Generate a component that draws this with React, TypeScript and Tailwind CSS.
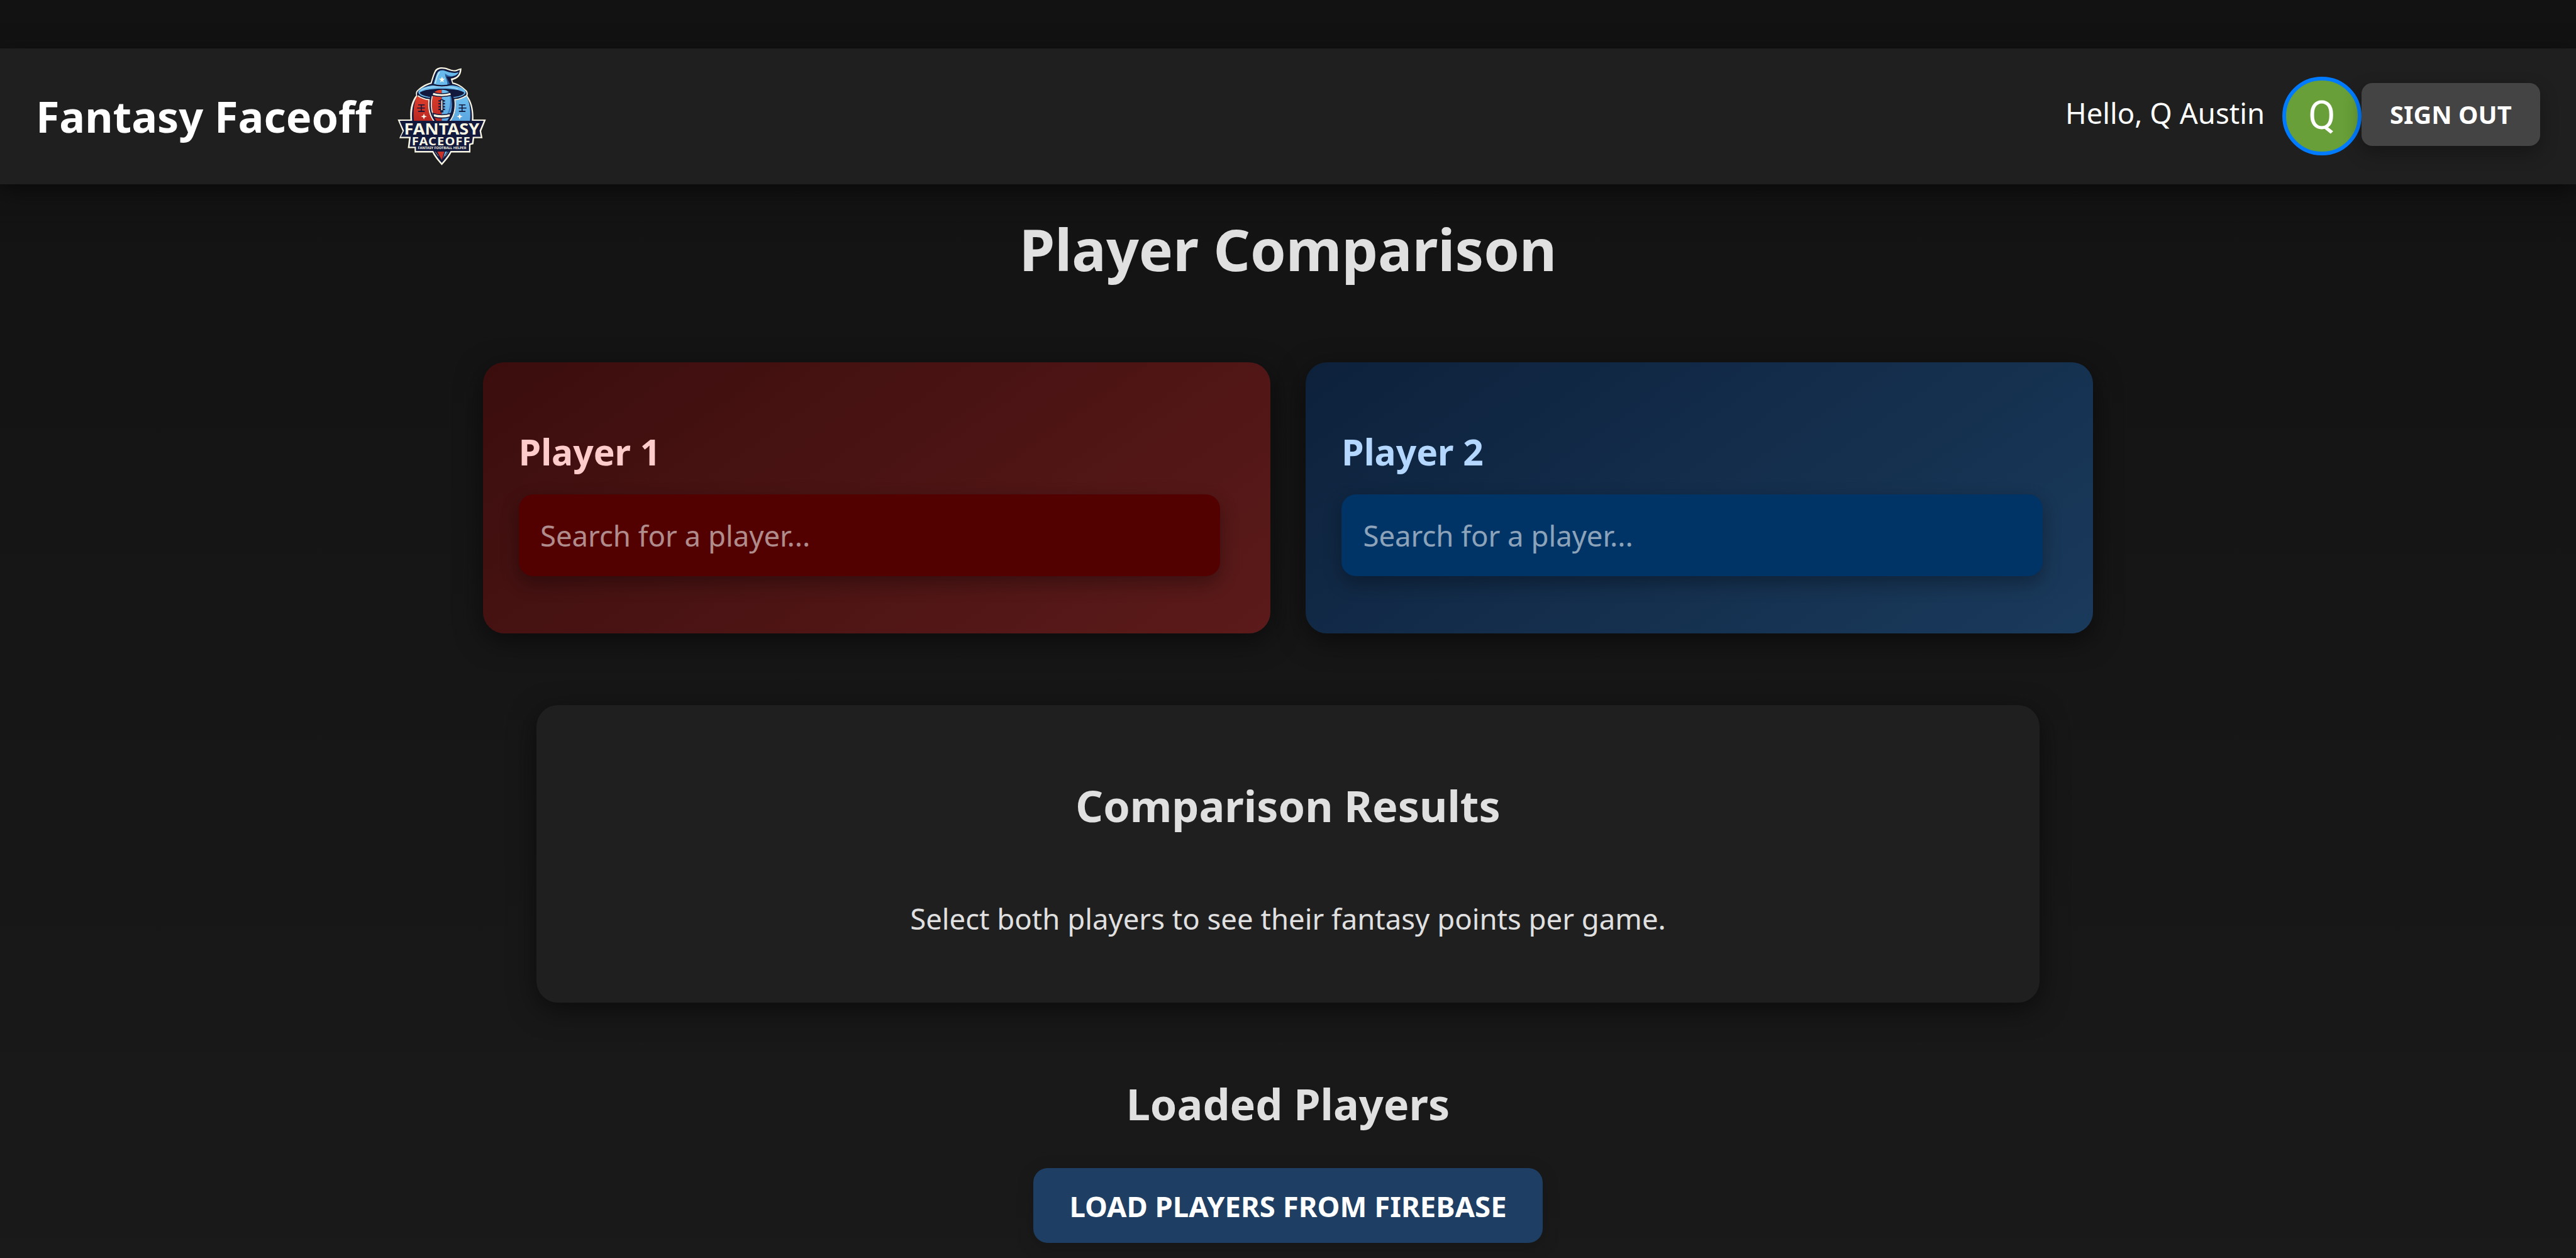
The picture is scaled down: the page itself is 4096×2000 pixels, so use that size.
function Logo() {
  return (
    <svg viewBox="34.5 45 540 540" className="ml-[26.6px] size-[170.67px] shrink-0" aria-label="Fantasy Faceoff logo">
      <defs>
        <linearGradient id="red" x1="0" y1="0" x2="0" y2="1">
          <stop offset="0" stopColor="#e0402c" />
          <stop offset="1" stopColor="#b92722" />
        </linearGradient>
        <linearGradient id="blue" x1="0" y1="0" x2="0" y2="1">
          <stop offset="0" stopColor="#6fc0f0" />
          <stop offset="1" stopColor="#5aa5df" />
        </linearGradient>
      </defs>
      {/* cream outline */}
      <path
        d="M249 144 C256 120 262 100 270 84 C278 68 302 64 322 69 C345 75 360 86 378 80 C388 77 394 73 404 72 C404 96 396 120 366 129 L358 133 L362 144 C392 150 410 166 426 180 C436 188 438 198 434 210 C456 240 466 280 464 330 L527 330 L503 388 L510 424 L468 424 L464 454 L449 458 L449 496 L353 496 C343 518 322 540 305 560 C288 540 268 518 258 496 L168 496 L168 474 L134 474 L140 424 L91 424 L108 388 L83 330 L147 330 C143 284 150 240 176 208 C172 196 176 186 184 180 C200 166 218 152 249 144Z"
        fill="#f8f5e3"
      />
      {/* navy body */}
      <path
        d="M254 150 C262 122 268 104 275 90 C284 74 304 72 322 76 C344 82 360 92 380 86 L396 80 C394 100 386 114 364 121 L350 124 L358 150 C388 156 408 170 420 183 C432 192 430 202 426 212 C450 242 460 286 456 337 L516 337 L495 386 L501 417 L461 417 L457 448 L442 452 L442 488 L349 488 C339 508 322 530 305 548 C288 530 272 508 262 488 L175 488 L175 467 L143 467 L149 417 L99 417 L115 386 L93 337 L156 337 C152 290 158 246 182 213 C178 200 180 192 188 184 C204 172 226 156 254 150Z"
        fill="#12193c"
      />
      {/* shield halves */}
      <path d="M181 210 C196 221 216 229 238 232 C234 272 240 308 262 338 L165 338 C160 288 164 244 181 210Z" fill="url(#red)" />
      <path d="M429 210 C414 221 396 229 374 232 C378 272 372 308 350 338 L447 338 C452 288 446 244 429 210Z" fill="url(#blue)" />
      <path d="M185 210 C200 221 220 228 241 230 C236 272 244 310 266 338" fill="none" stroke="#f8f5e3" strokeWidth="6" />
      <path d="M427 210 C412 221 392 228 371 230 C376 272 368 310 346 338" fill="none" stroke="#f8f5e3" strokeWidth="6" />
      {/* yard marks */}
      <g stroke="#12193c" strokeWidth="5">
        <path d="M186 256H219M181 272H220M186 289H219M202 256V289" />
        <path d="M391 256H424M390 272H429M391 289H424M407 256V289" />
      </g>
      <path d="M215 300L219 311L230 315L219 319L215 330L211 319L200 315L211 311Z" fill="#fff8ee" />
      <path d="M395 300L399 311L410 315L399 319L395 330L391 319L380 315L391 311Z" fill="#fff8ee" />
      {/* hat brim */}
      <path d="M187 192 C188 174 225 162 262 157 H350 C388 160 424 174 425 192 C424 209 398 218 362 221 H250 C214 218 188 209 187 192Z" fill="#68b9ec" />
      <path d="M194 196 C216 168 394 168 418 196 C410 209 386 214 364 217 H247 C226 213 202 208 194 196Z" fill="#12193c" />
      {/* football */}
      <path d="M250 198 C238 250 246 304 275 340 H335 C364 304 372 250 360 198 C330 176 280 176 250 198Z" fill="#12193c" />
      <path d="M305 180 C288 180 276 184 266 194 C246 240 252 300 280 340 H305Z" fill="url(#red)" />
      <path d="M305 180 C322 180 334 184 344 194 C364 240 358 300 330 340 H305Z" fill="url(#blue)" />
      <path d="M344 204 C352 240 346 280 326 316 C352 300 362 240 348 204Z" fill="#3d7bbd" />
      <path d="M257 212 C249 244 251 280 263 312" fill="none" stroke="#f8f5e3" strokeWidth="5" />
      <path d="M260 193 C288 202 322 202 350 193 L353 208 C322 216 288 216 257 208Z" fill="#f8f5e3" stroke="#12193c" strokeWidth="5" />
      <path d="M260 299 C288 308 322 308 350 299 L346 316 C320 324 290 324 264 316Z" fill="#f8f5e3" stroke="#12193c" strokeWidth="5" />
      <path d="M305 228V294" stroke="#12193c" strokeWidth="15" />
      <path d="M288 236H321M288 250H321M288 265H321M288 279H321" stroke="#12193c" strokeWidth="7" />
      <path d="M305 233V283" stroke="#f8f5e3" strokeWidth="6" />
      {/* hat cone */}
      <path d="M198 184 C220 168 264 164 305 164 C336 164 366 168 388 176" fill="none" stroke="#c9ecff" strokeWidth="3" />
      <path
        d="M263 154 C270 130 276 110 281 98 C287 84 302 80 318 84 C340 90 362 102 390 92 C384 106 368 113 348 112 C336 111 328 107 322 104 C326 124 334 140 342 154 C316 160 288 160 263 154Z"
        fill="#68b9ec"
      />
      <path d="M320 98 C332 108 348 113 366 111 C350 118 336 116 328 112 C334 130 342 144 348 154 L334 157 C332 134 326 114 320 98Z" fill="#2d5f9c" />
      <path d="M272 148 C278 124 282 104 294 91" fill="none" stroke="#d8f1ff" strokeWidth="4" />
      <path d="M258 153 C288 162 324 162 354 153" fill="none" stroke="#12193c" strokeWidth="7" />
      <path d="M306 114L310 124L321 125L312 132L315 143L306 137L297 143L300 132L291 125L302 124Z" fill="#fffbe8" />
      {/* ribbon and tip */}
      <path d="M282 491 H318 L305 534Z" fill="#c93228" />
      <path d="M322 491 H332 L311 527Z" fill="#68b9ec" />
      <path d="M272 492 L288 514M338 492 L322 514" stroke="#f8f5e3" strokeWidth="2" />
      <path d="M99 339H511M152 413H462" stroke="#12193c" strokeWidth="5" />
      <g fill="#f8f5e3" fontWeight="700">
        <text x="115" y="405" fontSize="80" textLength="379" lengthAdjust="spacingAndGlyphs" className="font-['Noto_Sans',sans-serif]">
          FANTASY
        </text>
        <text x="154" y="458" fontSize="55" textLength="297" lengthAdjust="spacingAndGlyphs" letterSpacing="3" className="font-['Noto_Sans',sans-serif]">
          FACEOFF
        </text>
        <text x="185" y="479" fontSize="18" textLength="243" lengthAdjust="spacingAndGlyphs" className="font-['Noto_Sans',sans-serif]">
          FANTASY FOOTBALL HELPER
        </text>
      </g>
    </svg>
  );
}

function Header() {
  return (
    <header className="flex h-[216.2px] items-center justify-between bg-[#1f1f1f] px-[56.9px] text-white shadow-[0_11.4px_34px_rgba(0,0,0,0.5)]">
      <div className="flex items-center">
        <span className="text-[68.27px] leading-[93px] font-bold">Fantasy Faceoff</span>
        <Logo />
      </div>
      <div className="flex items-center">
        <span className="mr-[28.4px] mb-[10.8px] text-[45.51px] leading-[62px]">Hello, Q Austin</span>
        <div className="flex size-[125.2px] items-center justify-center rounded-full border-6 border-[#007bff] bg-[#689f38] pb-[3px] font-[Roboto,sans-serif] text-[63px] leading-none">
          Q
        </div>
        <button className="mb-[6px] h-[99.6px] rounded-[17px] bg-[#444] px-[45.5px] text-[39.82px] leading-[54px] font-bold shadow-[0_11.4px_28.4px_rgba(0,0,0,0.3)]">
          SIGN OUT
        </button>
      </div>
    </header>
  );
}

function PlayerCard({ title, card, heading, input }: { title: string; card: string; heading: string; input: string }) {
  return (
    <section className={`h-[430.5px] w-[1251.6px] rounded-[34.1px] px-[56.9px] pt-[103.2px] shadow-[0_11.4px_42.7px_rgba(0,0,0,0.5)] ${card}`}>
      <h3 className={`mb-[28.8px] text-[56.89px] leading-[77.5px] font-bold ${heading}`}>{title}</h3>
      <input
        type="text"
        placeholder="Search for a player..."
        className={`block h-[129.9px] w-[1115px] rounded-[22.8px] px-[34.1px] text-[45.51px] leading-[62px] text-white shadow-[0_11.4px_28.4px_rgba(0,0,0,0.3)] outline-none placeholder:text-white/55 ${input}`}
      />
    </section>
  );
}

export default function App() {
  return (
    <div className="h-[2000px] w-[4096px] overflow-hidden bg-[linear-gradient(to_bottom,#121212,#1a1a1a)] bg-[length:100%_2124px] pt-[76.8px] font-['Noto_Sans',sans-serif] text-[#e0e0e0]">
      <Header />
      <main className="flex flex-col items-center">
        <h1 className="mt-[41px] mb-[118.5px] text-[91.02px] leading-[124px] font-bold">Player Comparison</h1>
        <div className="flex gap-[56.9px]">
          <PlayerCard
            title="Player 1"
            card="bg-[linear-gradient(145deg,#3b0d0d,#5c1a1a)]"
            heading="text-[#ffcccc]"
            input="bg-[#520000]"
          />
          <PlayerCard
            title="Player 2"
            card="bg-[linear-gradient(145deg,#0d213b,#1a3a5c)]"
            heading="text-[#b3d7ff]"
            input="bg-[#003366]"
          />
        </div>
        <section className="mt-[113.7px] h-[473.1px] w-[2389.3px] rounded-[34.1px] bg-[#1f1f1f] pt-[113.8px] text-center shadow-[0_11.4px_42.7px_rgba(0,0,0,0.5)]">
          <h2 className="mb-[101.8px] text-[68.27px] leading-[93px] font-bold">Comparison Results</h2>
          <p className="text-[45.51px] leading-[62px]">Select both players to see their fantasy points per game.</p>
        </section>
        <h2 className="mt-[113.8px] mb-[56.8px] text-[68.27px] leading-[93px] font-bold">Loaded Players</h2>
        <button className="h-[118.5px] rounded-[22.8px] bg-[#1e3f63] px-[56.9px] text-[45.51px] leading-[62px] font-bold text-white shadow-[0_5.7px_28.4px_rgba(0,0,0,0.15)]">
          LOAD PLAYERS FROM FIREBASE
        </button>
      </main>
    </div>
  );
}
